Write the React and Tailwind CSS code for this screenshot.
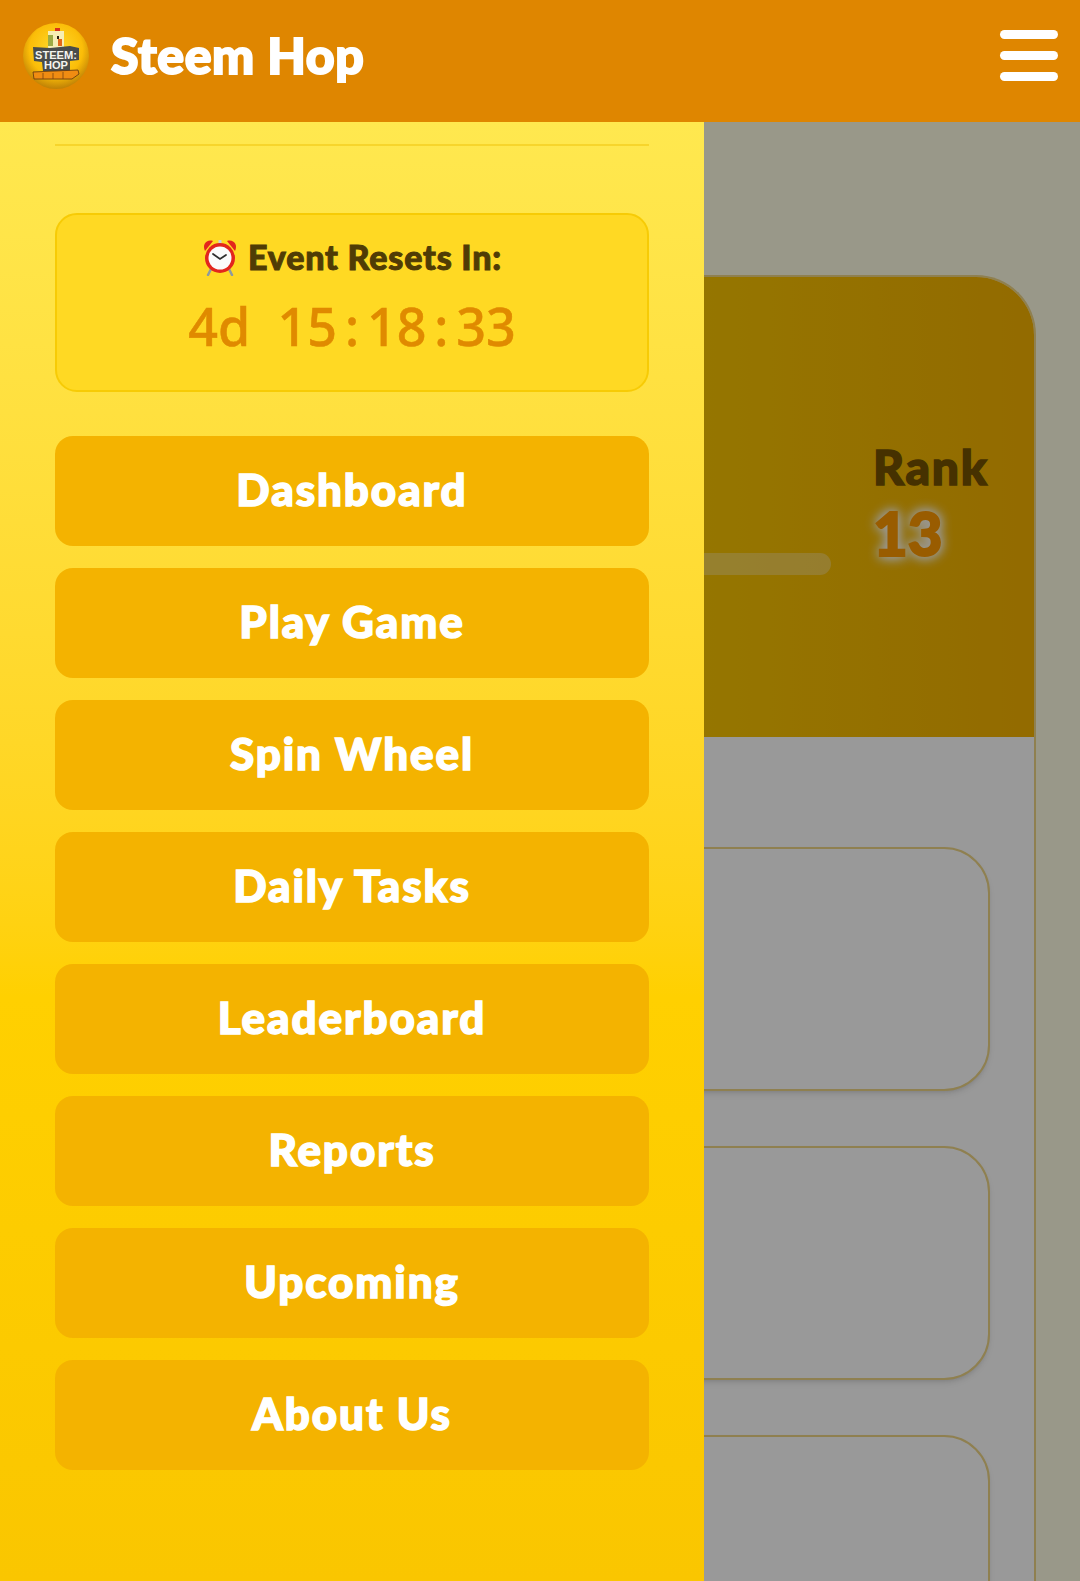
const NAV_ITEMS = ["Dashboard", "Play Game", "Spin Wheel", "Daily Tasks", "Leaderboard", "Reports", "Upcoming", "About Us"];
const TIMER = "4d 15:18:33".split("");

function Logo() {
  return (
    <svg width="66" height="66" viewBox="23 23 66 66" className="shrink-0">
      <defs>
        <radialGradient id="ball" cx="50%" cy="40%" r="62%">
          <stop offset="0%" stopColor="#ffdc2e" />
          <stop offset="65%" stopColor="#fbbd08" />
          <stop offset="100%" stopColor="#b87a06" />
        </radialGradient>
      </defs>
      <circle cx="56" cy="56" r="33" fill="url(#ball)" />
      {/* chicken */}
      <rect x="55" y="28" width="5" height="3" fill="#d8301c" />
      <rect x="48" y="31" width="16" height="17" fill="#f6eeb5" />
      <rect x="48" y="35" width="5" height="11" fill="#9cab44" />
      <rect x="57" y="36" width="2" height="3" fill="#2b2113" />
      <rect x="58" y="39" width="4" height="7" fill="#e2671a" />
      {/* sign */}
      <path d="M33 47 L50 48 L70 46 L79 48 L79 60 L70 61 L70 71 L43 71 L42 62 L34 61 Z" fill="#4a4d4b" />
      <text x="56" y="59" textAnchor="middle" fill="#f4f4ee" fontSize="11.5" fontWeight="900" fontFamily="Liberation Sans, sans-serif" textLength="42" lengthAdjust="spacingAndGlyphs">STEEM:</text>
      <text x="56" y="69" textAnchor="middle" fill="#f4f4ee" fontSize="11" fontWeight="900" fontFamily="Liberation Sans, sans-serif" textLength="24" lengthAdjust="spacingAndGlyphs">HOP</text>
      {/* bricks */}
      <path d="M33 72 L78 70 L79 74 L72 79 L34 79 Z" fill="#f08c12" stroke="#5c3310" strokeWidth="0.8" />
      <path d="M43 73 V79 M53 73 V79 M63 72 V79" stroke="#7a4512" strokeWidth="0.8" />
    </svg>
  );
}

function AlarmClock() {
  return (
    <svg width="36" height="38" viewBox="0 0 36 38" className="shrink-0">
      <path d="M3 13 C0 7 4 1 11 3 Z" fill="#e3261d" />
      <path d="M33 13 C36 7 32 1 25 3 Z" fill="#e3261d" />
      <path d="M9 31 L6 37 M27 31 L30 37" stroke="#8d9aa0" strokeWidth="2.5" strokeLinecap="round" />
      <rect x="16.5" y="2" width="3" height="4" fill="#c9d2d6" />
      <circle cx="18" cy="20" r="15" fill="#e3261d" />
      <circle cx="18" cy="20" r="11.5" fill="#fbfbfb" />
      <path d="M11 16 L18 21 L24 17" fill="none" stroke="#2e2e2e" strokeWidth="1.8" strokeLinecap="round" />
    </svg>
  );
}

function NavButton({ label }) {
  return (
    <button className="flex h-[110px] w-full items-center justify-center rounded-[18px] bg-[#f4b300] pb-1 font-['Lato'] text-[44px] font-black tracking-[1.9px] text-white [-webkit-text-stroke:1.5px_#ffffff]">
      {label}
    </button>
  );
}

export default function App() {
  return (
    <div className="relative h-[1581px] w-[1080px] overflow-hidden bg-[#fffde5] font-['Lato',sans-serif]">
      {/* page under the drawer */}
      <main className="pl-[45px] pr-[44px] pt-[275px]">
        <div className="h-[1400px] overflow-hidden rounded-t-[60px] border-x-2 border-t-2 border-[#eed585] bg-white">
          <div className="flex h-[460px] gap-[42px] bg-gradient-to-r from-[#ffea00] to-[#f5b200] pl-[44px] pr-[43px] pt-[162px]">
            <div className="mt-[114px] h-[22px] flex-1 rounded-full bg-white/30" />
            <div className="w-[118px]">
              <div className="text-[48px] font-black leading-[56px] tracking-[1.7px] text-[#755300] [-webkit-text-stroke:1.5px_#755300]">Rank</div>
              <div className="mt-[6px] text-[60px] font-black leading-[64px] text-[#ff9a00] [text-shadow:0_0_10px_#fff,0_0_14px_#fff,0_0_14px_#fff] [-webkit-text-stroke:2px_#ff9a00]">13</div>
            </div>
          </div>
          <div className="flex flex-col gap-[55px] px-[44px] pt-[110px]">
            <div className="h-[244px] rounded-[46px] border-2 border-[#eed585] bg-white shadow-md" />
            <div className="h-[234px] rounded-[46px] border-2 border-[#eed585] bg-white shadow-md" />
            <div className="h-[300px] rounded-[46px] border-2 border-[#eed585] bg-white shadow-md" />
          </div>
        </div>
      </main>

      <div className="absolute inset-0 bg-black/40" />

      {/* drawer */}
      <aside className="absolute bottom-0 left-0 top-[122px] w-[704px] bg-gradient-to-b from-[#ffe84f] via-[#ffd000] via-60% to-[#fac600] px-[55px]">
        <div className="mt-[22px] h-[2px] bg-[#f7d52c]" />
        <div className="mt-[67px] flex h-[179px] flex-col items-center rounded-[22px] border-2 border-[#f7cb05] bg-[#ffd923] pt-[22px]">
          <div className="flex items-center gap-[10px] text-[34px] font-black leading-[40px] tracking-[0.8px] text-[#503c05] [-webkit-text-stroke:1px_#503c05]">
            <AlarmClock />
            <span>Event Resets In:</span>
          </div>
          <div className="mt-[17px] flex font-['Noto_Sans',sans-serif] text-[52px] font-medium leading-[64px] text-[#e08a00] [-webkit-text-stroke:0.5px_#e08a00]">
            {TIMER.map((c, i) => (
              <span key={i} className="w-[29.8px] text-center">{c}</span>
            ))}
          </div>
        </div>
        <nav className="mt-[44px] flex flex-col gap-[22px]">
          {NAV_ITEMS.map((item) => (
            <NavButton key={item} label={item} />
          ))}
        </nav>
      </aside>

      {/* top bar */}
      <header className="absolute inset-x-0 top-0 flex h-[122px] items-center justify-between bg-[#df8600] pb-[11px] pl-[23px] pr-[22px]">
        <div className="flex items-center gap-[22px]">
          <Logo />
          <span className="font-['Lato'] text-[50px] font-black tracking-[0.6px] text-white [-webkit-text-stroke:2px_#ffffff]">Steem Hop</span>
        </div>
        <div className="flex w-[58px] flex-col gap-[12px]">
          <div className="h-[9px] rounded-full bg-white" />
          <div className="h-[9px] rounded-full bg-white" />
          <div className="h-[9px] rounded-full bg-white" />
        </div>
      </header>
    </div>
  );
}
